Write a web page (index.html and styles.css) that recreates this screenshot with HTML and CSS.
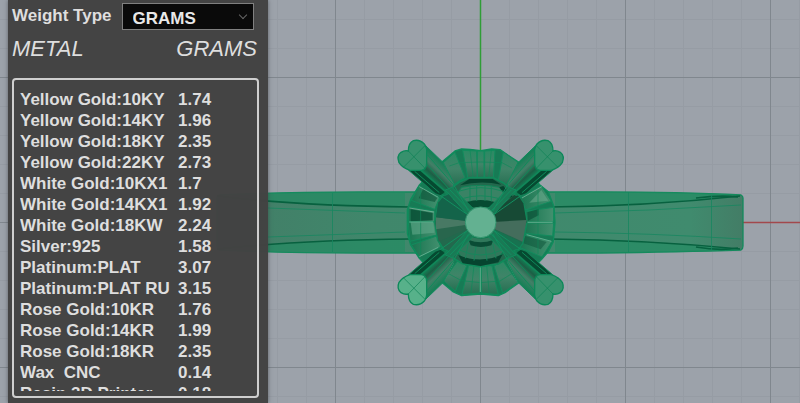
FILE: index.html
```
<!DOCTYPE html>
<html lang="en">
<head>
<meta charset="UTF-8">
<meta name="viewport" content="width=device-width, initial-scale=1.0">
<title>Metal Weights</title>
<link rel="stylesheet" href="styles.css">
</head>
<body>
<main class="workspace">
  <svg class="scene" viewBox="0 0 800 403" preserveAspectRatio="xMidYMid slice" role="img" aria-label="Ring model, top view">
    <defs>
      <pattern id="minor" x="16" y="19" width="29" height="29" patternUnits="userSpaceOnUse">
        <path d="M.5 0V29M0 .5H29" stroke="#8f969e" stroke-width="1" opacity=".5"/>
      </pattern>
      <pattern id="major" x="45" y="77" width="145" height="145" patternUnits="userSpaceOnUse">
        <path d="M.5 0V145M0 .5H145" stroke="#7d838b" stroke-width="1" opacity=".85"/>
      </pattern>
      <linearGradient id="band">
        <stop offset="0" stop-color="#437d67"/>
        <stop offset=".3" stop-color="#40876b"/>
        <stop offset=".9" stop-color="#408b6e"/>
        <stop offset="1" stop-color="#437d66"/>
      </linearGradient>
      <linearGradient id="facet" x1="0" y1="0" x2="0" y2="1">
        <stop offset="0" stop-color="#2a8a63"/>
        <stop offset=".5" stop-color="#408468"/>
        <stop offset="1" stop-color="#276f52"/>
      </linearGradient>
      <linearGradient id="facetSide">
        <stop offset="0" stop-color="#197550"/>
        <stop offset="1" stop-color="#43906f"/>
      </linearGradient>
      <linearGradient id="prong" gradientUnits="userSpaceOnUse" x1="132" y1="76" x2="76" y2="138">
        <stop offset="0" stop-color="#168157"/>
        <stop offset=".3" stop-color="#437f67"/>
        <stop offset=".55" stop-color="#1c5f45"/>
        <stop offset=".72" stop-color="#128457"/>
        <stop offset="1" stop-color="#07482f"/>
      </linearGradient>
    </defs>

    <!-- construction grid and axes -->
    <rect width="800" height="403" fill="#9ca2aa"/>
    <rect width="800" height="403" fill="url(#minor)"/>
    <rect width="800" height="403" fill="url(#major)"/>
    <path d="M480.500 0V160" stroke="#2f9d36" stroke-width="1.500"/>
    <path d="M740 222.500H800" stroke="#a2484c" stroke-width="1.500"/>

    <!-- band -->
    <path d="M480 192H600Q680 192 741 195Q743 196 743 198V246Q743 249 741 250Q680 252 600 253H360Q280 253 219 250Q217 249 217 246V198Q217 196 219 195Q280 192 360 192Z" fill="url(#band)" stroke="#138a5c" stroke-width="1.300"/>
    <g fill="#1f8d62" opacity=".6">
      <path d="M555 192Q670 191 741 195Q660 205 555 206Z"/>
      <path d="M555 253Q670 253 741 250Q660 240 555 239Z"/>
      <path d="M405 192H335L268 193V201Q330 206 405 207Z"/>
      <path d="M405 253H335L268 252V245Q330 240 405 239Z"/>
    </g>
    <g fill="none" stroke="#07613f" stroke-width="1.700">
      <path d="M217 196Q300 206 410 207M217 249Q300 240 410 239"/>
      <path d="M550 207Q650 206 740 196M550 239Q650 240 740 249"/>
      <path d="M696 198Q720 195 738 197M696 247Q720 251 738 248"/>
    </g>
    <g fill="none" stroke="#168760" stroke-width=".8">
      <path d="M268 208L405 213M268 237L405 232M555 213Q650 211 741 205M555 232Q650 233 741 239"/>
      <path d="M332.500 193V252M628.500 192V252M711.500 195V250"/>
    </g>

    <!-- head, drawn in units of a third -->
    <g transform="translate(390 130) scale(.3333)" stroke-linejoin="round">
      <path d="M160 92L195 63L215 57L240 58L272 62L305 57L330 59L358 78L388 98L450 165L475 185L492 230L495 278L490 335L475 365L455 388L385 460L345 488L325 497L272 492L215 497L190 486L155 457L88 385L62 345L52 310V240L62 208L88 165Z" fill="#177b55" stroke="#0f8d5c" stroke-width="4"/>

      <!-- outer facets -->
      <g fill="url(#facet)" stroke="#128c5d" stroke-width="3">
        <path d="M160 98L195 67L225 143L208 152L190 166Z"/>
        <path d="M218 61L260 63L262 144L234 146Z"/>
        <path d="M262 63L282 63V144H262Z"/>
        <path d="M284 63L315 61L310 146L284 144Z"/>
        <path d="M340 66L384 97L362 150L345 168L325 150Z"/>
        <path d="M160 452L205 390L230 408L196 484Z"/>
        <path d="M216 494L236 406L270 402V489Z"/>
        <path d="M274 489V402L306 408L325 494Z"/>
        <path d="M338 489L312 408L338 392L384 457Z"/>
      </g>
      <g fill="url(#facetSide)" stroke="#128c5d" stroke-width="3">
        <path d="M87 168L148 205L134 238L64 211Z"/>
        <path d="M55 230L134 244V275H55Z"/>
        <path d="M55 277H134L140 315L60 334Z"/>
        <path d="M64 345L140 318L152 350L88 380Z"/>
        <path d="M390 205L454 168L484 214L407 240Z"/>
        <path d="M407 244L491 232V276H410Z"/>
        <path d="M410 279H491L488 318L404 310Z"/>
        <path d="M403 314L486 334L456 381L388 352Z"/>
      </g>
      <g fill="#0b5137">
        <path d="M62 238L128 249V271L62 274Z" opacity=".85"/>
        <path d="M86 205L100 176L142 204L134 216Z" opacity=".6"/>
        <path d="M412 247L446 237V256L414 272Z" opacity=".7"/>
        <path d="M406 318L470 336L452 358L396 338Z" opacity=".5"/>
      </g>
      <path d="M62 277H130L134 308L67 314Z" fill="#62a98a" opacity=".6"/>
      <path d="M418 218L454 180L475 212Z" fill="#72ad91" opacity=".5"/>
      <g fill="none" stroke="#0d8a59" stroke-width="2">
        <path d="M178 108L208 98L272 96L336 98L366 114M174 430L214 452L272 458L330 453L367 430"/>
        <path d="M92 180V376M444 180V372M240 60L250 145M304 60L296 145M243 492L252 405M298 492L290 405"/>
      </g>
      <g fill="none" stroke="#89bda6" stroke-width="2">
        <path d="M160 100L190 160M384 100L355 160M88 170L145 202M455 170L396 204M58 276H130M412 277H488M88 380L145 352M162 452L190 400M384 457L352 395M271 410V486M58 234L132 246M410 314L484 334"/>
      </g>

      <!-- funnel -->
      <path d="M208 156L238 143H310L342 160L378 190L400 220L410 278L398 340L375 370L325 402L270 410L215 400L170 372L143 330L135 275L145 218L172 184Z" fill="#22694d" stroke="#108a5b" stroke-width="5"/>
      <path d="M272 278L145 215L136 280L146 335Z" fill="#28664d"/>
      <path d="M272 278L138 262V298Z" fill="#55816e" opacity=".7"/>
      <path d="M272 278L172 184L145 218L138 262Z" fill="#14644a"/>
      <path d="M272 278L380 190L400 220L410 278Z" fill="#174a35"/>
      <path d="M272 278L410 270L398 335Z" fill="#446d5c"/>
      <path d="M272 278L398 338L372 372Z" fill="#177250"/>
      <path d="M190 208L215 172Q272 160 328 172L352 202L302 238L272 225L230 236Z" fill="#3a8365" stroke="#118557" stroke-width="3"/>
      <path d="M210 166L238 147H308L334 164Q272 150 210 166Z" fill="#06452f"/>
      <path d="M328 172L340 168L368 200L352 206Z" fill="#06452f"/>
      <path d="M228 216Q272 204 315 216L306 232H238Z" fill="#064b32"/>
      <path d="M205 184Q272 162 340 184M220 205Q272 190 324 205M240 167V214M260 166V212M285 166V212M304 167V214" fill="none" stroke="#15885b" stroke-width="3"/>
      <path d="M195 355L240 318Q272 330 306 318L350 355L325 384Q272 400 215 384Z" fill="#30785b" stroke="#0c7b50" stroke-width="4"/>
      <path d="M205 375Q272 403 338 373L325 397L272 408L218 400Z" fill="#06442f"/>
      <path d="M236 330Q272 344 310 330L304 346Q272 356 242 346Z" fill="#0a4c35"/>
      <path d="M235 340L226 385M258 350L252 392M286 350L291 392M308 340L318 385M208 360Q272 390 336 360" fill="none" stroke="#17865b" stroke-width="3"/>

      <!-- prongs -->
      <g id="prongArm">
        <path d="M56 121L108 48L160 98L192 160L186 186L166 196L136 190Z" fill="url(#prong)" stroke="#108a5b" stroke-width="3"/>
        <path d="M64 124L90 122L164 186L152 196L136 190Z" fill="#064a31"/>
        <path d="M74 124L148 188M90 118L172 188M110 102L180 180M112 74L188 162" fill="none" stroke="#0f8b5a" stroke-width="3"/>
        <path d="M166 180L186 172L262 248L244 266Z" fill="#197a55" stroke="#118d5d" stroke-width="3"/>
        <path d="M180 180L255 258M150 196L244 262M192 166L236 244" fill="none" stroke="#129060" stroke-width="3"/>
      </g>
      <use href="#prongArm" transform="matrix(-1 0 0 1 544 0)"/>
      <use href="#prongArm" transform="matrix(1 0 0 -1 0 555)"/>
      <use href="#prongArm" transform="matrix(-1 0 0 -1 544 555)"/>
      <g stroke="#0c8859" stroke-width="4">
        <path id="tip" d="M60 121Q38 114 27 98Q19 78 33 67Q44 60 55 63Q55 39 70 32Q89 27 103 42Q112 53 110 72V100Q110 119 94 121Z" fill="#37916d"/>
        <use href="#tip" transform="matrix(-1 0 0 1 544 0)"/>
        <use href="#tip" transform="matrix(-1 0 0 -1 544 555)"/>
        <path d="M60 434Q38 441 27 457Q19 477 33 488Q44 495 55 492Q55 516 70 523Q89 528 103 513Q112 502 110 483V455Q110 436 94 434Z" fill="#57b18a"/>
      </g>
      <path d="M40 112L104 48M55 63L108 118M504 112L440 48M489 63L436 118M40 443L104 507M55 492L108 437M504 443L440 507M489 492L436 437" stroke="#0c8055" stroke-width="2"/>
      <circle cx="272" cy="277" r="46" fill="#63b191" stroke="#35976f" stroke-width="3"/>
    </g>
  </svg>

  <section class="panel">
    <div class="weight-type">
      <label for="unit">Weight Type</label>
      <div class="select-box">
        <select id="unit">
          <option>GRAMS</option>
        </select>
      </div>
    </div>
    <div class="heading">
      <span>METAL</span>
      <span>GRAMS</span>
    </div>
    <div class="list">
      <div class="list-view">
        <table>
          <tbody>
            <tr><td>Yellow Gold:10KY</td><td>1.74</td></tr>
            <tr><td>Yellow Gold:14KY</td><td>1.96</td></tr>
            <tr><td>Yellow Gold:18KY</td><td>2.35</td></tr>
            <tr><td>Yellow Gold:22KY</td><td>2.73</td></tr>
            <tr><td>White Gold:10KX1</td><td>1.7</td></tr>
            <tr><td>White Gold:14KX1</td><td>1.92</td></tr>
            <tr><td>White Gold:18KW</td><td>2.24</td></tr>
            <tr><td>Silver:925</td><td>1.58</td></tr>
            <tr><td>Platinum:PLAT</td><td>3.07</td></tr>
            <tr><td>Platinum:PLAT RU</td><td>3.15</td></tr>
            <tr><td>Rose Gold:10KR</td><td>1.76</td></tr>
            <tr><td>Rose Gold:14KR</td><td>1.99</td></tr>
            <tr><td>Rose Gold:18KR</td><td>2.35</td></tr>
            <tr><td>Wax  CNC</td><td>0.14</td></tr>
            <tr><td>Resin 3D Printer</td><td>0.18</td></tr>
          </tbody>
        </table>
      </div>
    </div>
  </section>
</main>
</body>
</html>
```

FILE: styles.css
```
* {
  box-sizing: border-box;
}

body {
  margin: 0;
  font-family: "Liberation Sans", Arial, sans-serif;
  font-size: 17px;
  color: #dedede;
  background: #9ca2aa;
}

.workspace {
  position: relative;
  display: flex;
  height: 100vh;
  padding-left: 8px;
  overflow: hidden;
}

/* The model lies behind the panel */
.scene {
  position: absolute;
  inset: 0;
  width: 100%;
  height: 100%;
}

.panel {
  position: relative;
  display: flex;
  flex-direction: column;
  width: 260px;
  padding: 3px 9px 5px 4px;
  background: rgba(66, 66, 66, 0.98);
  box-shadow: 0 0 4px rgba(50, 55, 60, 0.6);
}

.weight-type {
  display: flex;
  gap: 10px;
  font-weight: bold;
}

.weight-type label {
  line-height: 25px;
}

.select-box {
  position: relative;
  width: 132px;
}

.select-box::after {
  content: "";
  position: absolute;
  top: 9px;
  right: 8px;
  width: 5px;
  height: 5px;
  border-right: 1px solid #666;
  border-bottom: 1px solid #666;
  transform: rotate(45deg);
  pointer-events: none;
}

select {
  display: block;
  width: 100%;
  height: 27px;
  padding: 3px 10px 0;
  font: inherit;
  color: #e8e8e8;
  background: #0a0a0a;
  border: 1px solid #808080;
  border-radius: 0;
  appearance: none;
}

.heading {
  display: flex;
  justify-content: space-between;
  padding: 6px 2px 0 0;
  font-size: 22px;
  font-style: italic;
  line-height: 26px;
}

.list {
  flex: 1;
  min-height: 0;
  margin-top: 16px;
  padding: 9px 6px 5px;
  border: 2px solid #cfcfcf;
  border-radius: 4px;
}

.list-view {
  height: 100%;
  overflow: hidden;
}

table {
  width: 100%;
  table-layout: fixed;
  border-collapse: collapse;
  font-weight: bold;
}

td {
  padding: 0;
  line-height: 21px;
  white-space: pre;
}

td:first-child {
  width: 158px;
}
```
